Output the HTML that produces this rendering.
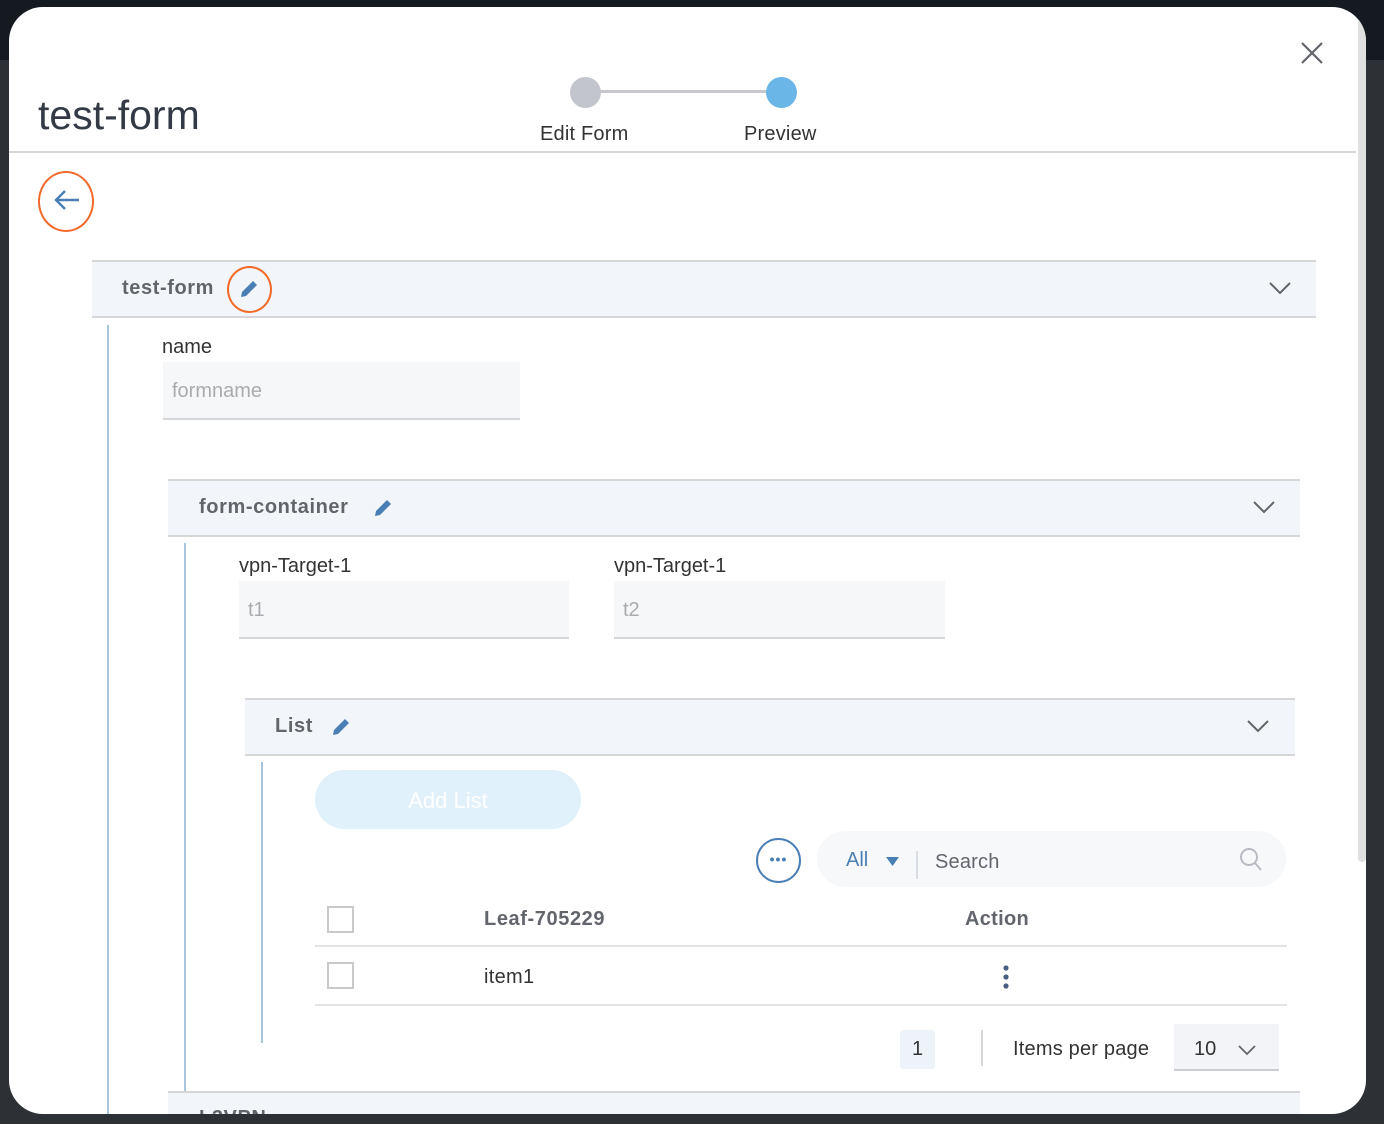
<!DOCTYPE html>
<html><head><meta charset="utf-8"><style>
*{margin:0;padding:0;box-sizing:border-box}
body{width:1384px;height:1124px;background:#2d3034;font-family:"Liberation Sans",sans-serif;position:relative;overflow:hidden}
.topbg{position:absolute;left:0;top:0;width:1384px;height:60px;background:#151a20}
.modal{position:absolute;left:9px;top:7px;width:1357px;height:1107px;background:#fff;border-radius:34px;overflow:hidden}
.a{position:absolute}
.sec{position:absolute;background:#f2f6fa;border-top:2px solid #d6d6d6;border-bottom:2px solid #d6d6d6}
.sec b{position:absolute;font-size:20px;color:#62656b;top:15px;letter-spacing:0.6px}
.vl{position:absolute;width:2px;background:#a7c6dc}
.lbl{position:absolute;font-size:20px;color:#333}
.inp{position:absolute;background:#f6f7f9;border-bottom:2px solid #d4d6da;font-size:20px;color:#a9abae;padding:18px 0 0 9px}
.chev{position:absolute}
.cb{position:absolute;width:27px;height:27px;border:2px solid #c9c9c9;background:#fff}
</style></head><body>
<div class="topbg"></div>
<div class="modal">
  <div class="a" style="left:29px;top:85px;font-size:41px;color:#333a45">test-form</div>
  <div class="a" style="left:577px;top:83px;width:196px;height:3px;background:#c6c8ce"></div>
  <div class="a" style="left:561px;top:70px;width:31px;height:31px;border-radius:50%;background:#c3c5cc"></div>
  <div class="a" style="left:757px;top:70px;width:31px;height:31px;border-radius:50%;background:#6ab6e6"></div>
  <div class="a" style="left:531px;top:116px;font-size:20px;color:#333;letter-spacing:0.2px">Edit Form</div>
  <div class="a" style="left:735px;top:116px;font-size:20px;color:#333;letter-spacing:0.2px">Preview</div>
  <svg class="a" style="left:1291px;top:34px" width="24" height="24"><path d="M2 2L22 22M22 2L2 22" stroke="#62656b" stroke-width="2.2"/></svg>
  <div class="a" style="left:0;top:144px;width:1347px;height:2px;background:#d6d6d6"></div>
  <div class="a" style="left:29px;top:164px;width:56px;height:61px;border:2px solid #f26a2a;border-radius:50%"></div>
  <svg class="a" style="left:44px;top:181px" width="28" height="24"><path d="M26 12H3M12 3L3 12L12 21" stroke="#4a7fb5" stroke-width="2.4" fill="none"/></svg>
  <div class="sec" style="left:83px;top:253px;width:1224px;height:58px"><b style="left:30px">test-form</b></div>
  <div class="a" style="left:218px;top:259px;width:45px;height:47px;border:2px solid #f26a2a;border-radius:50%"></div>
  <svg class="a" style="left:230px;top:272px" width="20" height="20"><path d="M2 18L3 13L14 2L18 6L7 17Z" fill="#4a7fb5"/></svg>
  <svg class="chev" style="left:1260px;top:274px" width="22" height="14"><path d="M1 2L11 12L21 2" stroke="#62656b" stroke-width="2" fill="none"/></svg>
  <div class="vl" style="left:98px;top:318px;height:800px"></div>
  <div class="lbl" style="left:153px;top:329px">name</div>
  <div class="inp" style="left:154px;top:355px;width:357px;height:58px">formname</div>
  <div class="sec" style="left:159px;top:472px;width:1132px;height:58px"><b style="left:31px">form-container</b></div>
  <svg class="a" style="left:364px;top:491px" width="20" height="20"><path d="M2 18L3 13L14 2L18 6L7 17Z" fill="#4a7fb5"/></svg>
  <svg class="chev" style="left:1244px;top:493px" width="22" height="14"><path d="M1 2L11 12L21 2" stroke="#62656b" stroke-width="2" fill="none"/></svg>
  <div class="vl" style="left:175px;top:536px;height:550px"></div>
  <div class="lbl" style="left:230px;top:548px">vpn-Target-1</div>
  <div class="lbl" style="left:605px;top:548px">vpn-Target-1</div>
  <div class="inp" style="left:230px;top:574px;width:330px;height:58px">t1</div>
  <div class="inp" style="left:605px;top:574px;width:331px;height:58px">t2</div>
  <div class="sec" style="left:236px;top:691px;width:1050px;height:58px"><b style="left:30px">List</b></div>
  <svg class="a" style="left:322px;top:710px" width="20" height="20"><path d="M2 18L3 13L14 2L18 6L7 17Z" fill="#4a7fb5"/></svg>
  <svg class="chev" style="left:1238px;top:712px" width="22" height="14"><path d="M1 2L11 12L21 2" stroke="#62656b" stroke-width="2" fill="none"/></svg>
  <div class="vl" style="left:252px;top:755px;height:281px"></div>
  <div class="a" style="left:306px;top:763px;width:266px;height:59px;border-radius:30px;background:#e1f1fb;color:#fff;font-size:22px;text-align:center;line-height:61px">Add List</div>
  <div class="a" style="left:747px;top:831px;width:45px;height:45px;border:2px solid #4a7fb5;border-radius:50%;color:#4a7fb5;text-align:center;font-size:14px;line-height:38px;font-weight:bold;letter-spacing:1px">•••</div>
  <div class="a" style="left:808px;top:824px;width:469px;height:56px;border-radius:28px;background:#f7f8fa"></div>
  <div class="a" style="left:837px;top:842px;font-size:20px;color:#4a7fb5">All</div>
  <svg class="a" style="left:877px;top:850px" width="13" height="9"><path d="M0 0H13L6.5 9Z" fill="#4a7fb5"/></svg>
  <div class="a" style="left:907px;top:844px;width:2px;height:28px;background:#d8dde3"></div>
  <div class="a" style="left:926px;top:844px;font-size:20px;color:#62656b;letter-spacing:0.2px">Search</div>
  <svg class="a" style="left:1229px;top:840px" width="26" height="26"><circle cx="11" cy="10" r="8" stroke="#b8bcc2" stroke-width="2" fill="none"/><path d="M17 16L23 23" stroke="#b8bcc2" stroke-width="2"/></svg>
  <div class="cb" style="left:318px;top:899px"></div>
  <div class="a" style="left:475px;top:901px;font-size:20px;font-weight:bold;color:#62656b;letter-spacing:0.6px">Leaf-705229</div>
  <div class="a" style="left:956px;top:901px;font-size:20px;font-weight:bold;color:#62656b;letter-spacing:0.3px">Action</div>
  <div class="a" style="left:306px;top:938px;width:972px;height:2px;background:#e3e3e3"></div>
  <div class="cb" style="left:318px;top:955px"></div>
  <div class="a" style="left:475px;top:959px;font-size:20px;color:#333;letter-spacing:0.3px">item1</div>
  <svg class="a" style="left:993px;top:957px" width="8" height="26"><circle cx="4" cy="4" r="2.6" fill="#4a5e80"/><circle cx="4" cy="13" r="2.6" fill="#4a5e80"/><circle cx="4" cy="22" r="2.6" fill="#4a5e80"/></svg>
  <div class="a" style="left:306px;top:997px;width:972px;height:2px;background:#e3e3e3"></div>
  <div class="a" style="left:891px;top:1023px;width:35px;height:39px;background:#eef3f9;border-radius:3px;text-align:center;line-height:39px;font-size:20px;color:#333">1</div>
  <div class="a" style="left:972px;top:1023px;width:2px;height:36px;background:#d6d6d6"></div>
  <div class="a" style="left:1004px;top:1031px;font-size:20px;color:#333;letter-spacing:0.2px">Items per page</div>
  <div class="a" style="left:1165px;top:1017px;width:105px;height:47px;background:#f2f4f7;border-bottom:2px solid #c9cdd3"></div>
  <div class="a" style="left:1185px;top:1031px;font-size:20px;color:#333">10</div>
  <svg class="a" style="left:1229px;top:1037px" width="18" height="12"><path d="M1 2L9 10L17 2" stroke="#62656b" stroke-width="1.8" fill="none"/></svg>
  <div class="sec" style="left:159px;top:1084px;width:1132px;height:60px;border-bottom:none"><b style="left:31px;top:14px">L3VPN</b></div>
  <div class="a" style="left:1349px;top:-3px;width:8px;height:858px;background:#e0e0e0;border-radius:4px"></div>
</div>
</body></html>
